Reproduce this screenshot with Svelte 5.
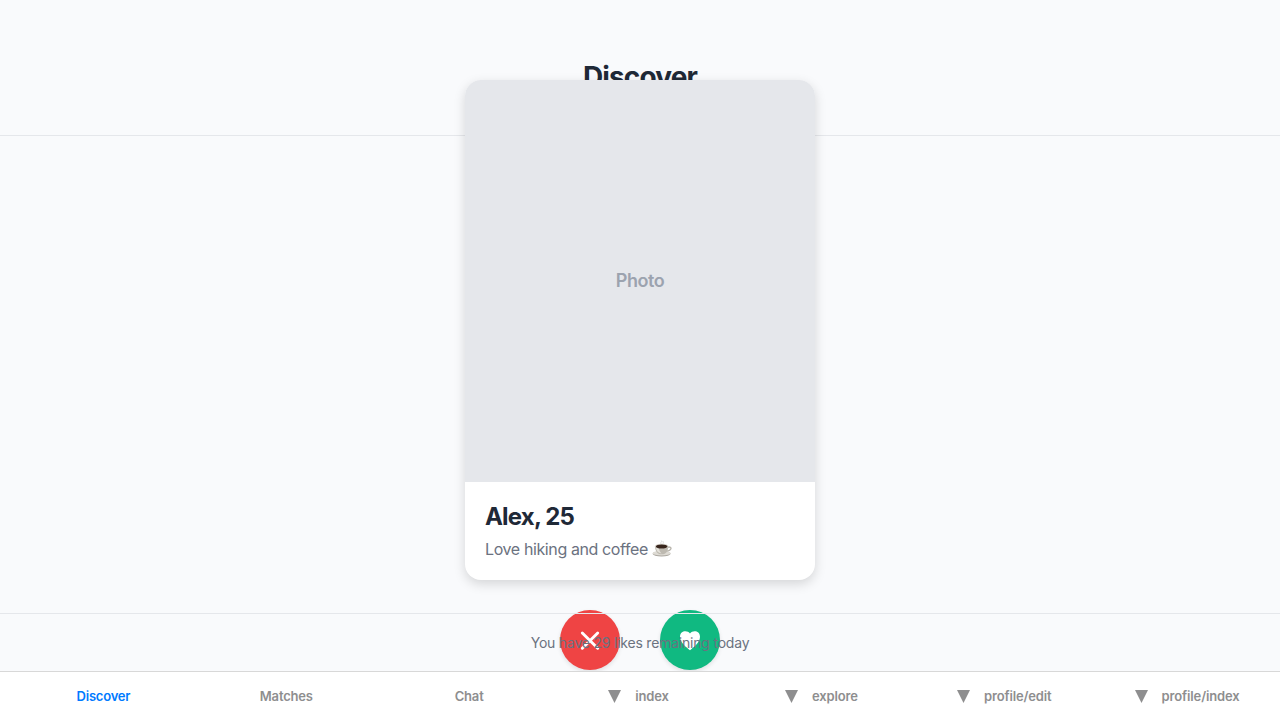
<script>
  const tabs = [
    { label: 'Discover', active: true },
    { label: 'Matches' },
    { label: 'Chat' },
    { label: 'index', arrow: true },
    { label: 'explore', arrow: true },
    { label: 'profile/edit', arrow: true },
    { label: 'profile/index', arrow: true }
  ];
</script>

<div class="screen">
  <header><h1>Discover</h1></header>

  <main>
    <article class="card">
      <div class="photo"><span>Photo</span></div>
      <div class="info">
        <h2>Alex, 25</h2>
        <p>
          <span>Love hiking and coffee</span>
          <svg class="cup" width="20" height="20" viewBox="0 0 20 20" role="img" aria-label="coffee">
            <ellipse cx="9.6" cy="14.8" rx="9" ry="2.6" fill="#aaa69f" />
            <ellipse cx="9.6" cy="14.2" rx="9" ry="2.3" fill="#dedbd4" />
            <path d="M15.5 8.3c2.7-.8 4 .3 3.3 1.8-.6 1.3-2.4 2-4.2 2" fill="none" stroke="#b8b4ac" stroke-width="1.3" />
            <path d="M3 7.5c.2 4.2 2 7.8 6.7 7.8s6.4-3.6 6.600-7.800z" fill="#bdb9b0" />
            <path d="M4 9c.5 3 2 5 5.500 5.500C8 13 7 11 6.900 9z" fill="#e4e1da" />
            <ellipse cx="9.650" cy="7.300" rx="6.700" ry="2.500" fill="#d6d2ca" />
            <ellipse cx="9.650" cy="7.500" rx="5.800" ry="2" fill="#38251d" />
            <path d="M9 5c-1.500-1.500 1.500-2 .3-3.500M11 4.800c1.200-1.200-.6-2 .2-2.800" fill="none" stroke="#d4d4d4" stroke-width=".8" />
          </svg>
        </p>
      </div>
    </article>
    <div class="actions">
      <button class="pass" aria-label="Pass">
        <svg width="24" height="24" viewBox="0 0 24 24"><path d="M4.300 5 19.700 20.300M19.700 5 4.300 20.300" stroke="#fff" stroke-width="2.900" stroke-linecap="round" /></svg>
      </button>
      <button class="like" aria-label="Like">
        <svg width="24" height="24" viewBox="0 0 24 24"><path d="M12 22.300C8.800 19.300 2 15 2 8.700 2 2.300 9.500 1.800 12 5.400 14.500 1.800 22 2.300 22 8.700 22 15 15.200 19.300 12 22.300z" fill="#fff" /></svg>
      </button>
    </div>
  </main>

  <footer>You have 29 likes remaining today</footer>

  <nav>
    {#each tabs as tab}
      <a class:active={tab.active} class:with-icon={tab.arrow}>
        {#if tab.arrow}
          <svg width="13" height="13" viewBox="0 0 13 13"><path d="M0 0H13L6.500 13z" fill="currentColor" /></svg>
        {/if}
        <span>{tab.label}</span>
      </a>
    {/each}
  </nav>
</div>

<style>
  :global(body) { margin: 0; overflow: hidden; }
  .screen {
    display: flex; flex-direction: column; width: 100%; height: 100vh;
    background: #f9fafc;
    font-family: Inter, "Liberation Sans", sans-serif;
  }
  header {
    box-sizing: border-box; height: 136px; padding-top: 60px; flex: none;
    border-bottom: 1px solid #e5e7eb; text-align: center;
  }
  h1 { margin: 0; font-size: 28px; line-height: 34px; font-weight: 700; color: #1f2937; letter-spacing: -0.85px; }
  main {
    position: relative; flex: 1; min-height: 0; padding-top: 1px;
    display: flex; flex-direction: column; align-items: center; justify-content: center; gap: 30px;
  }
  .card {
    flex: none; display: flex; flex-direction: column; width: 350px; height: 500px;
    border-radius: 16px; background: #fff; overflow: hidden; box-shadow: 0 4px 12px rgba(0, 0, 0, 0.15);
  }
  .photo { flex: 1; display: flex; align-items: center; justify-content: center; background: #e5e7eb; }
  .photo span { padding-bottom: 2px; font-size: 18px; font-weight: 600; color: #9ca3af; letter-spacing: -0.45px; }
  .info { padding: 20px; height: 58px; }
  h2 { margin: 0 0 8px; font-size: 24px; line-height: 29px; font-weight: 700; color: #1f2937; letter-spacing: -0.82px; }
  p { display: flex; gap: 4px; margin: 0; font-size: 16px; line-height: 21px; color: #6b7280; letter-spacing: -0.39px; white-space: nowrap; }
  .cup { flex: none; }
  .actions { flex: none; display: flex; gap: 40px; }
  button {
    display: flex; align-items: center; justify-content: center; width: 60px; height: 60px; padding: 0;
    border: 0; border-radius: 50%; box-shadow: 0 2px 4px rgba(0, 0, 0, 0.1);
  }
  .pass { background: #ef4444; }
  .like { background: #10b981; }
  footer {
    position: relative; flex: none; box-sizing: border-box; height: 58px; padding-top: 20px;
    border-top: 1px solid #e5e7eb; text-align: center;
    font-size: 14px; line-height: 18px; color: #6b7280; letter-spacing: -0.21px;
  }
  nav {
    position: relative; flex: none; display: grid; grid-template-columns: repeat(7, minmax(0, 1fr));
    height: 48px; border-top: 1px solid #d8d8d8; background: #fff;
  }
  a {
    display: flex; align-items: center; justify-content: center; gap: 14px;
    padding-left: 24px; font-size: 13px; font-weight: 600; color: #8e8e8f; white-space: nowrap;
    letter-spacing: -0.2px;
  }
  a.with-icon { padding: 0 3px 0 0; letter-spacing: -0.14px; }
  a.active { color: #007aff; }
</style>
